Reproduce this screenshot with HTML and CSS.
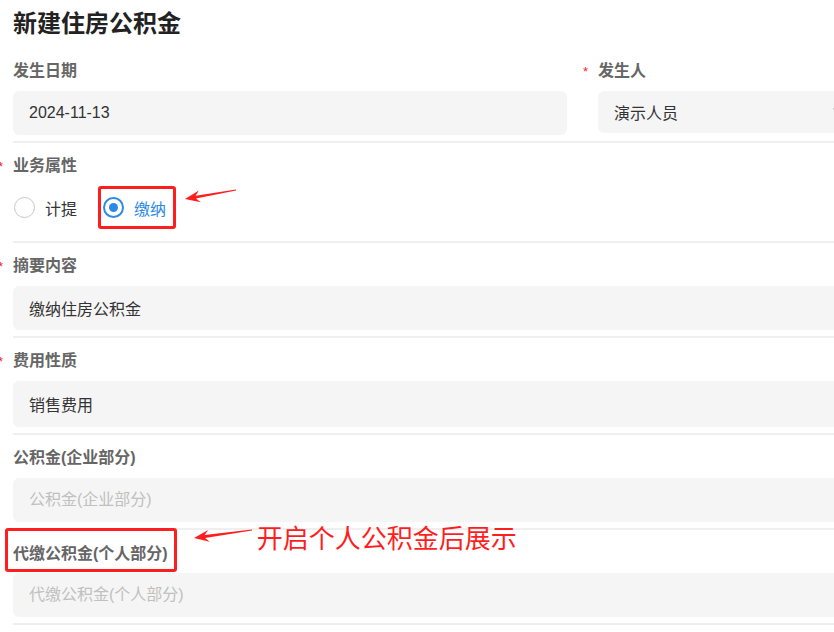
FILE: index.html
```html
<!DOCTYPE html>
<html lang="zh-CN">
<head>
<meta charset="utf-8">
<title>新建住房公积金</title>
<link rel="stylesheet" href="styles.css">
</head>
<body>
<div class="page">
  <h1 class="title">新建住房公积金</h1>

  <div class="item row-2col">
    <div class="col">
      <div class="label">发生日期</div>
      <input class="field" type="text" value="2024-11-13" readonly>
    </div>
    <div class="col">
      <div class="label"><span class="req">*</span>发生人</div>
      <div class="field select">
        <span>演示人员</span>
        <svg class="caret" width="10" height="6" viewBox="0 0 10 6"><path d="M0.5 0.5 L5 5 L9.5 0.5" fill="none" stroke="#999" stroke-width="1.2"/></svg>
      </div>
    </div>
  </div>

  <div class="item">
    <div class="label"><span class="req">*</span>业务属性</div>
    <div class="radio-group">
      <label class="radio-opt">
        <span class="radio"></span>
        <span class="radio-text">计提</span>
      </label>
      <label class="radio-opt checked annot-box">
        <span class="radio"><span class="dot"></span></span>
        <span class="radio-text">缴纳</span>
      </label>
      <svg class="arrow arrow-1" width="56" height="20" viewBox="0 0 56 20"><polygon points="2,13 15.8,4.5 12.6,9.7 52.9,3.5 53.1,4.5 13,12.5 17.8,16.3" fill="#ff1e1e"/></svg>
    </div>
  </div>

  <div class="item">
    <div class="label"><span class="req">*</span>摘要内容</div>
    <input class="field" type="text" value="缴纳住房公积金" readonly>
  </div>

  <div class="item">
    <div class="label"><span class="req">*</span>费用性质</div>
    <input class="field tall" type="text" value="销售费用" readonly>
  </div>

  <div class="item">
    <div class="label">公积金(企业部分)</div>
    <input class="field" type="text" placeholder="公积金(企业部分)">
  </div>

  <div class="item annotated">
    <div class="label-wrap">
      <div class="annot-label">
        <div class="label">代缴公积金(个人部分)</div>
      </div>
      <svg class="arrow arrow-2" width="66" height="18" viewBox="0 0 66 18"><polygon points="6,11 20.1,3 16.7,8.1 63.9,2.5 64.1,3.5 17.1,10.9 21.7,14.8" fill="#ff1e1e"/></svg>
      <span class="annot-text">开启个人公积金后展示</span>
    </div>
    <input class="field" type="text" placeholder="代缴公积金(个人部分)">
  </div>
</div>
</body>
</html>
```

FILE: styles.css
```css
html, body {
  margin: 0;
  padding: 0;
  background: #ffffff;
  overflow: hidden;
}

body {
  font-family: "Liberation Sans", "Noto Sans CJK SC", sans-serif;
  color: #333333;
}

.page {
  width: 838px;
  padding: 8px 0 0 13px;
}

.title {
  margin: 0 0 8px 0;
  font-size: 24px;
  line-height: 32px;
  font-weight: bold;
  color: #222222;
}

.item {
  padding: 11px 0 6px 0;
  border-bottom: 2px solid #efefef;
}

.row-2col {
  display: grid;
  grid-template-columns: 554px 1fr;
  column-gap: 31px;
}

.label {
  height: 24px;
  line-height: 24px;
  font-size: 16px;
  font-weight: bold;
  color: #666666;
  margin-bottom: 8px;
  white-space: nowrap;
}

.req {
  display: inline-block;
  width: 16px;
  margin-left: -16px;
  font-size: 13px;
  font-weight: normal;
  color: #f5222d;
  vertical-align: top;
  line-height: 26px;
  text-indent: 1px;
}

.field {
  display: block;
  box-sizing: border-box;
  width: 100%;
  height: 44px;
  margin: 0;
  padding: 0 16px;
  border: 0;
  border-radius: 6px;
  background: #f5f5f5;
  font-family: inherit;
  font-size: 16px;
  color: #333333;
  outline: none;
}

.field::placeholder {
  color: #c0c0c0;
}

.field.tall {
  height: 46px;
}

.select {
  height: 42px;
  display: flex;
  align-items: center;
  justify-content: space-between;
  padding-right: 8px;
}

.caret {
  display: block;
  margin-top: -3px;
}

.radio-group {
  display: flex;
  align-items: flex-start;
  height: 49px;
}

.radio-opt {
  display: flex;
  align-items: center;
  height: 43px;
  box-sizing: border-box;
  font-size: 16px;
}

.radio-opt:first-child {
  margin-left: 1px;
  margin-right: 21px;
}

.radio {
  box-sizing: border-box;
  width: 21px;
  height: 21px;
  border: 1.5px solid #c8c8c8;
  border-radius: 50%;
  display: flex;
  align-items: center;
  justify-content: center;
  background: #fff;
}

.radio-text {
  margin-left: 10px;
  color: #333333;
}

.radio-opt.checked .radio {
  border: 2px solid #2b8ae6;
}

.radio-opt.checked .radio-text {
  color: #2b8ae6;
}

.dot {
  width: 9px;
  height: 9px;
  border-radius: 50%;
  background: #2b8ae6;
}

.annot-box {
  border: 3px solid #ff1e1e;
  border-radius: 3px;
  padding: 0 7px 0 2px;
}

.arrow {
  display: block;
  flex: none;
}

.arrow-1 {
  margin-left: 7px;
}

.annotated {
  padding-top: 0;
}

.label-wrap {
  display: flex;
  align-items: flex-start;
  margin-bottom: 1px;
}

.annot-label {
  margin: -2px 0 0 -8px;
  padding: 11px 6px 3px 5px;
  border: 3px solid #ff1e1e;
  border-radius: 3px;
}

.annot-label .label {
  margin-bottom: 0;
}

.arrow-2 {
  margin: -3px 0 0 11px;
}

.annot-text {
  margin: -8px 0 0 3px;
  font-family: "Noto Sans CJK SC", sans-serif;
  font-size: 26px;
  line-height: 30px;
  color: #ff1e1e;
  white-space: nowrap;
}
```
